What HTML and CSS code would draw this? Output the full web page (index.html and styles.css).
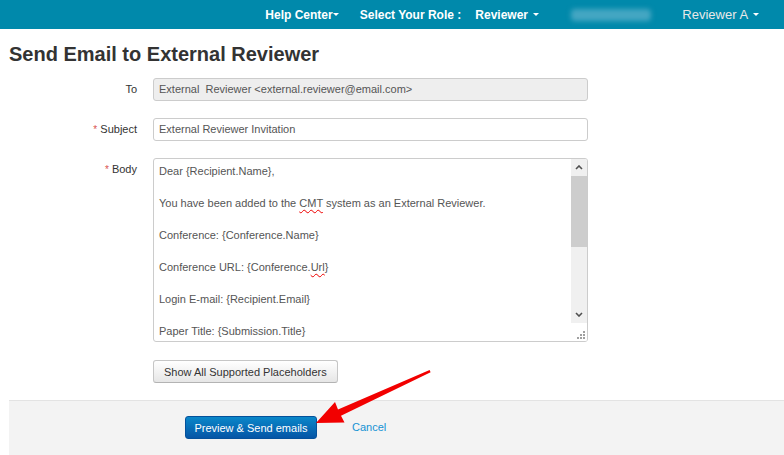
FILE: index.html
```html
<!DOCTYPE html>
<html lang="en">
<head>
    <meta charset="UTF-8">
    <title>Send Email to External Reviewer</title>
    <link rel="stylesheet" href="styles.css">
</head>
<body>
<div class="navbar">
    <a class="nav-item bold">Help Center<span class="caret tight"></span></a>
    <span class="nav-item bold role-label">Select Your Role :</span>
    <a class="nav-item bold role">Reviewer <span class="caret"></span></a>
    <span class="nav-blur"></span>
    <a class="nav-item user">Reviewer A <span class="caret"></span></a>
</div>

<div class="page">
    <h1>Send Email to External Reviewer</h1>

    <div class="form">
        <div class="row">
            <label>To</label>
            <div class="field readonly">External&nbsp; Reviewer &lt;external.reviewer@email.com&gt;</div>
        </div>
        <div class="row">
            <label><span class="req">*</span> Subject</label>
            <div class="field">External Reviewer Invitation</div>
        </div>
        <div class="row">
            <label><span class="req">*</span> Body</label>
            <div class="body-box">
                <div class="body-text">Dear {Recipient.Name},

You have been added to the <span class="typo">CMT</span> system as an External Reviewer.

Conference: {Conference.Name}

Conference URL: {Conference.<span class="typo">Url</span>}

Login E-mail: {Recipient.Email}

Paper Title: {Submission.Title}</div>
                <div class="scroll">
                    <div class="sb-btn">
                        <svg width="8" height="5" viewBox="0 0 8 5"><path d="M1 4 L4 1 L7 4" fill="none" stroke="#505050" stroke-width="1.6"/></svg>
                    </div>
                    <div class="sb-thumb"></div>
                    <div class="sb-track"></div>
                    <div class="sb-btn">
                        <svg width="8" height="5" viewBox="0 0 8 5"><path d="M1 1 L4 4 L7 1" fill="none" stroke="#505050" stroke-width="1.6"/></svg>
                    </div>
                    <div class="sb-corner">
                        <svg width="8" height="8" viewBox="0 0 8 8" fill="#a0a0a0">
                            <rect x="6" y="0" width="2" height="2"/>
                            <rect x="3" y="3" width="2" height="2"/>
                            <rect x="6" y="3" width="2" height="2"/>
                            <rect x="0" y="6" width="2" height="2"/>
                            <rect x="3" y="6" width="2" height="2"/>
                            <rect x="6" y="6" width="2" height="2"/>
                        </svg>
                    </div>
                </div>
            </div>
        </div>
        <div class="row actions">
            <label></label>
            <button class="btn">Show All Supported Placeholders</button>
        </div>
    </div>

    <div class="footer">
        <button class="btn btn-primary">Preview &amp; Send emails</button>
        <a class="cancel">Cancel</a>
    </div>
</div>

<!-- annotation arrow drawn on the screenshot -->
<svg class="arrow" width="784" height="455" viewBox="0 0 784 455">
    <polygon points="316,423 335,402 338,409.5 429.6,370 430.6,372.2 341,415.8 344.5,422.5" fill="#f20000"/>
</svg>
</body>
</html>
```

FILE: styles.css
```css
body {
    margin: 0;
    font-family: "Liberation Sans", Arial, sans-serif;
    font-size: 11px;
    color: #333;
    background-color: #fff;
}

.navbar {
    height: 29px;
    background-color: #0089ab;
    display: flex;
    align-items: center;
    justify-content: flex-end;
    padding-right: 25px;
    color: #fff;
}

.nav-item {
    font-size: 12px;
    white-space: nowrap;
}

.bold {
    font-weight: bold;
}

.role-label {
    margin-left: 21px;
}

.role {
    margin-left: 14px;
}

.user {
    margin-left: 31px;
    font-size: 13px;
    color: #e8e8e8;
}

.nav-blur {
    width: 80px;
    height: 12px;
    margin-left: 32px;
    background-color: #44a6c2;
    border-radius: 4px;
    filter: blur(2.5px);
}

.caret {
    display: inline-block;
    vertical-align: middle;
    margin-left: 2px;
    margin-top: -2px;
    border-top: 3px solid #fff;
    border-left: 3px solid transparent;
    border-right: 3px solid transparent;
}

.caret.tight {
    margin-left: 0;
}

.page {
    padding-left: 9px;
}

h1 {
    margin: 13px 0 12px 0;
    font-size: 20px;
    line-height: 24px;
    font-weight: bold;
    color: #333;
}

.form {
    display: flex;
    flex-direction: column;
    gap: 17px;
}

.row {
    display: flex;
    align-items: flex-start;
}

.row label {
    width: 128px;
    margin-right: 16px;
    text-align: right;
    line-height: 23px;
    font-size: 11px;
    color: #333;
}

.actions {
    margin-top: 1px;
}

.req {
    color: #d9534f;
    font-size: 10px;
}

.field {
    width: 435px;
    height: 23px;
    box-sizing: border-box;
    border: 1px solid #ccc;
    border-radius: 3px;
    padding: 0 5px;
    line-height: 21px;
    color: #555;
    background-color: #fff;
    font-size: 11px;
}

.field.readonly {
    background-color: #eee;
}

.body-box {
    width: 435px;
    height: 184px;
    box-sizing: border-box;
    border: 1px solid #ccc;
    border-radius: 3px;
    display: flex;
    background-color: #fff;
    overflow: hidden;
}

.body-text {
    flex: 1;
    padding: 4px 5px;
    white-space: pre-wrap;
    line-height: 16px;
    font-size: 11px;
    color: #555;
    overflow: hidden;
}

.typo {
    text-decoration: underline wavy #e00;
    text-decoration-thickness: 1px;
    text-underline-offset: 2px;
}

.scroll {
    width: 16px;
    display: flex;
    flex-direction: column;
    background-color: #f0f0f0;
}

.sb-btn {
    height: 17px;
    display: flex;
    align-items: center;
    justify-content: center;
}

.sb-thumb {
    height: 71px;
    background-color: #cdcdcd;
}

.sb-track {
    flex: 1;
}

.sb-corner {
    height: 16px;
    background-color: #fff;
    display: flex;
    align-items: flex-end;
    justify-content: flex-end;
    padding: 0 2px 2px 0;
}

.btn {
    height: 23px;
    padding: 0 10px;
    border: 1px solid #c6c6c6;
    border-bottom-color: #b3b3b3;
    border-radius: 3px;
    background: linear-gradient(#ffffff, #e6e6e6);
    font-family: "Liberation Sans", Arial, sans-serif;
    font-size: 11px;
    color: #333;
    cursor: pointer;
}

.footer {
    margin-top: 17px;
    height: 60px;
    padding: 15px 0 0 176px;
    box-sizing: border-box;
    background-color: #f3f3f3;
    border-top: 1px solid #e3e3e3;
    display: flex;
    align-items: flex-start;
}

.btn-primary {
    width: 132px;
    padding: 0;
    border-color: #04519b;
    background: linear-gradient(#0a87c9, #0555a6);
    color: #fff;
}

.cancel {
    margin-left: 35px;
    line-height: 23px;
    font-size: 11px;
    color: #1592d3;
    cursor: pointer;
}

.arrow {
    position: absolute;
    left: 0;
    top: 0;
    pointer-events: none;
}
```
